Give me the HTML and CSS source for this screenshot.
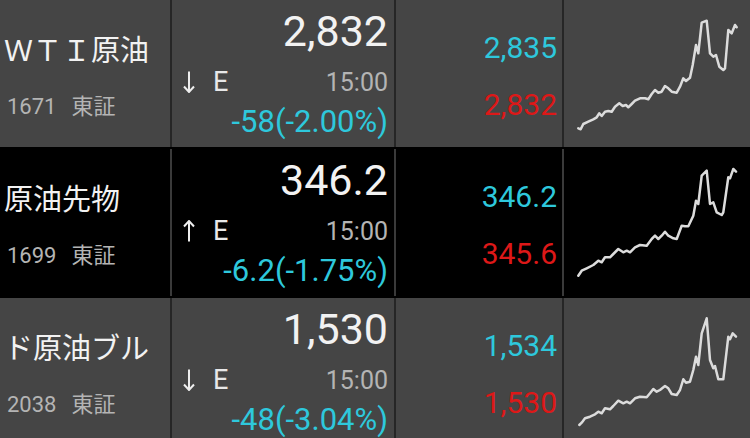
FILE: index.html
```html
<!DOCTYPE html>
<html lang="ja">
<head>
  <meta charset="UTF-8">
  <title>原油 銘柄リスト</title>
  <link rel="stylesheet" href="styles.css">
</head>
<body>

  <div class="quote-list">

    <div class="quote-row">
      <div class="cell name-cell">
        <div class="name">ＷＴＩ原油</div>
        <div class="code">1671<span class="market">東証</span></div>
      </div>
      <div class="cell price-cell">
        <div class="price">2,832</div>
        <div class="meta">
          <svg class="trend" viewBox="0 0 12 22" width="12" height="22"><path d="M6 0.5V21 M1 15.5L6 21L11 15.5"/></svg>
          <span class="flag">E</span>
          <span class="time">15:00</span>
        </div>
        <div class="change">-58(-2.00%)</div>
      </div>
      <div class="cell board-cell">
        <div class="ask">2,835</div>
        <div class="bid">2,832</div>
      </div>
      <div class="chart-cell">
        <svg class="spark" viewBox="0 0 186 147" width="186" height="147">
          <polyline points="14.3,128.3 16.7,129.3 19.3,124 24.3,121.7 29.3,119.3 32.7,117.3 35.3,113.3 37.7,116 41,111.7 44.3,111 47.7,111.7 51,106.7 55.3,103.3 58.7,106 62,105 64.3,107.3 67.7,104 71,100.7 76,98.3 81,98.3 84.3,99.3 87.7,94 91,90 94.3,92.7 97.7,91.7 101,86 104.3,88.3 107.7,91.7 112.7,92.7 116,86.7 119.3,78.3 122,81 126,77.7 128.7,65 132,45 134.3,53.3 137.7,22.7 142.7,20.7 146,53.3 149.3,56.7 152,55 155.3,66.7 159.3,70 161,68.3 164.3,30 167.7,33.3 171,25 172.7,27.3"/>
        </svg>
      </div>
    </div>

    <div class="quote-row dark">
      <div class="cell name-cell">
        <div class="name">原油先物</div>
        <div class="code">1699<span class="market">東証</span></div>
      </div>
      <div class="cell price-cell">
        <div class="price">346.2</div>
        <div class="meta">
          <svg class="trend" viewBox="0 0 12 22" width="12" height="22"><path d="M6 21.5V1 M1 6.5L6 1L11 6.5"/></svg>
          <span class="flag">E</span>
          <span class="time">15:00</span>
        </div>
        <div class="change">-6.2(-1.75%)</div>
      </div>
      <div class="cell board-cell">
        <div class="ask">346.2</div>
        <div class="bid">345.6</div>
      </div>
      <div class="chart-cell">
        <svg class="spark" viewBox="0 0 186 147" width="186" height="147">
          <polyline points="14.3,126.7 17.7,121.7 22.7,119.3 29.3,116 34.3,111.7 37.7,113.3 41,108.3 46,108.3 49.3,105 54.3,100 59.3,103.3 62.7,101.7 66,103.3 71,98.3 76,96 82.7,96.7 87.7,90 91,86.7 94.3,90 97.7,86.7 101,82.7 104.3,86.7 109.3,89.3 112.7,90 117.7,76.7 121,77.3 124.3,77.3 129.3,66.7 132,51.7 134.3,55 137.7,26.7 142.7,21.7 146,55 149.3,53.3 152.7,63.3 157.7,66 159.3,63.3 164.3,28.3 166,29.3 169.3,20 172,22.7"/>
        </svg>
      </div>
    </div>

    <div class="quote-row">
      <div class="cell name-cell">
        <div class="name">ド原油ブル</div>
        <div class="code">2038<span class="market">東証</span></div>
      </div>
      <div class="cell price-cell">
        <div class="price">1,530</div>
        <div class="meta">
          <svg class="trend" viewBox="0 0 12 22" width="12" height="22"><path d="M6 0.5V21 M1 15.5L6 21L11 15.5"/></svg>
          <span class="flag">E</span>
          <span class="time">15:00</span>
        </div>
        <div class="change">-48(-3.04%)</div>
      </div>
      <div class="cell board-cell">
        <div class="ask">1,534</div>
        <div class="bid">1,530</div>
      </div>
      <div class="chart-cell">
        <svg class="spark" viewBox="0 0 186 147" width="186" height="147">
          <polyline points="15.3,127 17.7,124.7 21,120.3 26,118.7 31,116.3 34.3,113.7 37.7,115.3 41,110.3 46,111.3 49.3,108 54.3,102.7 59.3,105.3 62.7,103.7 66,105.3 71,100.3 76,98.7 82.7,99.3 86,95.3 89.3,91 92.7,93.7 96,92 101,88 104.3,90.3 107.7,96 112.7,97 116,92 119.3,81.3 122,84.7 126,83.7 129.3,72 132,58.7 134.3,67 137.7,35.3 142.7,20.3 146,62 149.3,70.3 151,68 154.3,81.3 159.3,81.3 164.3,38.7 166,41.3 168.7,35.3 172,38.7"/>
        </svg>
      </div>
    </div>

  </div>

</body>
</html>
```

FILE: styles.css
```css
body {
  margin: 0;
  background: #000;
  font-family: Roboto, "Noto Sans CJK JP", sans-serif;
  color: #f2f2f2;
  overflow: hidden;
}
.quote-list {
  display: flex;
  flex-direction: column;
  gap: 2px;
}
.quote-row {
  display: grid;
  grid-template-columns: 172px 224px 168px 1fr;
  height: 147px;
  background: #454545;
  --line: #262626;
}
.quote-row.dark {
  background: #000;
  --line: #3a3a3a;
}
.quote-row:last-child {
  height: 140px;
}
.cell {
  border-right: 2px solid var(--line);
  display: flex;
  flex-direction: column;
}

/* name + code */
.name-cell {
  padding-left: 4px;
}
.name {
  font-family: "Noto Sans CJK JP", sans-serif;
  font-size: 29px;
  line-height: 96px;
  white-space: nowrap;
  overflow: hidden;
}
.code {
  font-size: 22px;
  line-height: 20px;
  color: #b4b4b4;
  padding-left: 3px;
  margin-top: -2px;
}
.market {
  font-family: "Noto Sans CJK JP", sans-serif;
  margin-left: 15px;
}

/* current price */
.price-cell {
  padding: 0 6px 0 11px;
  text-align: right;
}
.price {
  font-size: 43px;
  line-height: 62px;
}
.meta {
  display: flex;
  align-items: center;
  height: 40px;
  font-size: 25px;
}
.trend {
  fill: none;
  stroke: #eeeeee;
  stroke-width: 2;
  flex: none;
}
.flag {
  margin-left: 18px;
  font-size: 27px;
  color: #e8e8e8;
}
.time {
  margin-left: auto;
  color: #b4b4b4;
}
.change {
  font-size: 31px;
  line-height: 30px;
  margin-top: 5px;
  color: #2ec8dc;
  white-space: nowrap;
}

/* best ask / bid */
.board-cell {
  padding: 0 5px 0 0;
  text-align: right;
  font-size: 30px;
}
.ask {
  color: #2ec8dc;
  line-height: 36px;
  margin-top: 30px;
}
.bid {
  color: #dd1818;
  line-height: 36px;
  margin-top: 21px;
}

/* sparkline */
.chart-cell {
  overflow: hidden;
}
.spark polyline {
  fill: none;
  stroke: #dcdcdc;
  stroke-width: 2.5;
  stroke-linejoin: round;
  stroke-linecap: round;
}
```
